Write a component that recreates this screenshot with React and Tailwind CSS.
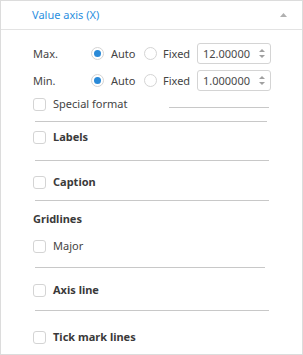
const font = { fontFamily: '"Segoe UI", "Noto Sans", "Open Sans", sans-serif' };

function Check() {
  return <span className="inline-block h-[13px] w-[13px] shrink-0 rounded-[3px] border border-[#d4d4d4] bg-white" />;
}

function Radio({ checked }) {
  return (
    <span className="flex h-[13px] w-[13px] shrink-0 items-center justify-center rounded-full border border-[#d4d4d4] bg-white">
      {checked && <span className="h-[7px] w-[7px] rounded-full bg-[#2a8ad8]" />}
    </span>
  );
}

function Spin({ value }) {
  return (
    <div className="flex h-[21px] w-[74px] items-center rounded-[3px] border border-[#d4d4d4] pl-[5px] pr-[4px]">
      <span className="w-[52px] overflow-hidden whitespace-nowrap text-[11px] leading-[14px] text-[#4a4a4a]">{value}</span>
      <svg width="8" height="13" viewBox="0 0 8 13" className="ml-auto">
        <path d="M1 5L4 2L7 5Z" fill="#a0a0a0" />
        <path d="M1 8L4 11L7 8Z" fill="#a0a0a0" />
      </svg>
    </div>
  );
}

function RangeRow({ label, value }) {
  return (
    <div className="flex h-[21px] items-center text-[11px] leading-[14px] text-[#444]">
      <span className="w-[58px]">{label}</span>
      <Radio checked />
      <span className="ml-[7px] w-[33px]">Auto</span>
      <Radio />
      <span className="ml-[6px] w-[34px]">Fixed</span>
      <Spin value={value} />
    </div>
  );
}

function Divider({ w = 'w-[234px]' }) {
  return <div className={`h-px ${w} bg-[#c8c8c8]`} />;
}

function Option({ label, bold }) {
  return (
    <div className="flex h-[14px] items-center gap-[7px]">
      <Check />
      <span className={`text-[11px] leading-[14px] ${bold ? 'font-bold text-[#3a3a3a]' : 'text-[#444]'}`}>{label}</span>
    </div>
  );
}

export default function App() {
  return (
    <div style={font} className="h-[355px] w-[303px] border border-[#dcdcdc] bg-white">
      <div className="flex h-[29px] items-center justify-between border-b border-[#e3e3e3] pl-[31px] pr-[15px]">
        <span className="text-[11px] leading-[14px] text-[#2b8fe0]">Value axis (X)</span>
        <svg width="7" height="4" viewBox="0 0 7 4">
          <path d="M0 4L3.5 0L7 4Z" fill="#b0b0b0" />
        </svg>
      </div>
      <div className="flex flex-col pl-[32px]">
        <div className="mt-[13px]">
          <RangeRow label="Max." value="12.00000" />
        </div>
        <div className="mt-[6px]">
          <RangeRow label="Min." value="1.000000" />
        </div>
        <div className="mt-[6px] flex items-center">
          <Option label="Special format" />
          <div className="ml-auto mr-[33px] mt-[6px] h-px w-[100px] bg-[#c8c8c8]" />
        </div>
        <div className="mt-[10px] pl-[2px]"><Divider w="w-[232px]" /></div>
        <div className="mt-[8px]"><Option label="Labels" bold /></div>
        <div className="mt-[16px] pl-[2px]"><Divider /></div>
        <div className="mt-[14px]"><Option label="Caption" bold /></div>
        <div className="mt-[11px] pl-[2px]"><Divider /></div>
        <div className="mt-[11px] h-[14px] text-[11px] font-bold leading-[14px] text-[#3a3a3a]">Gridlines</div>
        <div className="mt-[13px]"><Option label="Major" /></div>
        <div className="mt-[14px] pl-[2px]"><Divider w="w-[230px]" /></div>
        <div className="mt-[15px]"><Option label="Axis line" bold /></div>
        <div className="mt-[13px] pl-[2px]"><Divider /></div>
        <div className="mt-[19px]"><Option label="Tick mark lines" bold /></div>
      </div>
    </div>
  );
}
